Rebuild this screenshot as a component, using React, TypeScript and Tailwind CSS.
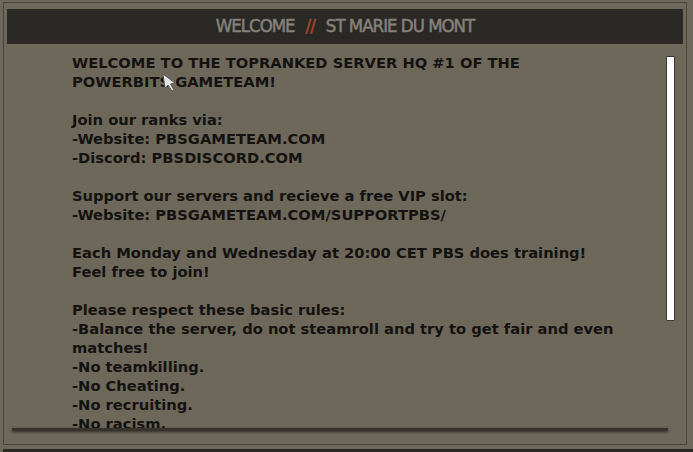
const lines: string[] = [
  "WELCOME TO THE TOPRANKED SERVER HQ #1 OF THE",
  "POWERBITS GAMETEAM!",
  "",
  "Join our ranks via:",
  "-Website: PBSGAMETEAM.COM",
  "-Discord: PBSDISCORD.COM",
  "",
  "Support our servers and recieve a free VIP slot:",
  "-Website: PBSGAMETEAM.COM/SUPPORTPBS/",
  "",
  "Each Monday and Wednesday at 20:00 CET PBS does training!",
  "Feel free to join!",
  "",
  "Please respect these basic rules:",
  "-Balance the server, do not steamroll and try to get fair and even",
  "matches!",
  "-No teamkilling.",
  "-No Cheating.",
  "-No recruiting.",
  "-No racism.",
];

export default function App() {
  return (
    <div className="h-[452px] w-[693px] overflow-hidden bg-[#6e685b] pl-[3px] pt-[2px]">
      <div className="relative flex h-[443px] w-[684px] flex-col border border-[#4a453c] bg-[#6e685b] px-[3px] pt-[6px]">
        {/* title bar */}
        <div className="flex h-[35px] items-center justify-center gap-[11px] bg-[#2b2926] pb-[1px] font-['DejaVu_Sans_Condensed','Liberation_Sans',sans-serif] text-[18.5px] font-normal tracking-[-1px] text-[#86817a] [-webkit-text-stroke:0.5px_#86817a]">
          <span>WELCOME</span>
          <span className="text-[#a5462e] [-webkit-text-stroke:0.5px_#a5462e]">//</span>
          <span>ST MARIE DU MONT</span>
        </div>

        {/* scrolling message */}
        <div className="relative flex flex-1 pr-[8px]">
          <div className="h-[385px] flex-1 overflow-hidden pl-[65px] pt-[9px] font-['DejaVu_Sans','Verdana',sans-serif] text-[14.7px] font-bold leading-[19px] text-[#141311]">
            {lines.map((l, i) => (
              <div key={i} className="h-[19px] whitespace-pre">
                {l}
              </div>
            ))}
          </div>
          <div className="ml-[4px] mt-[12px] h-[265px] w-[9px] rounded-[1px] border border-[#3b3833] bg-white" />
          <div className="absolute left-[5px] top-[384px] h-[3px] w-[656px] bg-[#36332d] shadow-[0_1px_3px_rgba(30,28,24,0.8)]" />
        </div>

        {/* mouse cursor */}
        <svg className="absolute left-[158px] top-[70px]" width="14" height="20" viewBox="0 0 14 20">
          <path d="M1 1 L3 15 L6 12 L10 18 L12 17 L8.5 11 L13 10 Z" fill="#e6e6e6" stroke="#5a5a5a" strokeWidth="1" />
        </svg>
      </div>
      <div className="mt-[4px] h-[3px] w-full bg-[#2a2824]" />
    </div>
  );
}
